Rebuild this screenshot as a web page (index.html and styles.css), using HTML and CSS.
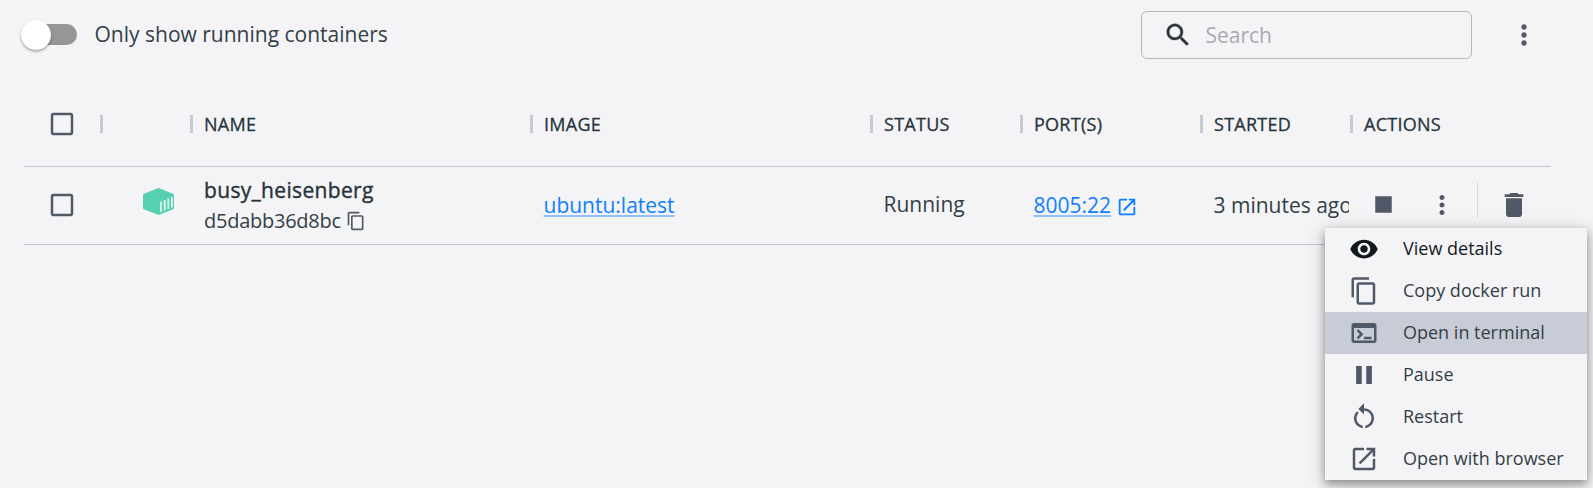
FILE: index.html
```html
<!DOCTYPE html>
<html lang="en">
<head>
<meta charset="utf-8">
<title>Containers</title>
<link rel="stylesheet" href="styles.css">
</head>
<body>
<svg class="defs" aria-hidden="true">
  <symbol id="dots" viewBox="0 0 24 24"><path d="M12 8c1.1 0 2-.9 2-2s-.9-2-2-2-2 .9-2 2 .9 2 2 2zm0 2c-1.1 0-2 .9-2 2s.9 2 2 2 2-.9 2-2-.9-2-2-2zm0 6c-1.1 0-2 .9-2 2s.9 2 2 2 2-.9 2-2-.9-2-2-2z"/></symbol>
  <symbol id="box" viewBox="0 0 24 24"><path d="M19 5v14H5V5h14m0-2H5c-1.100 0-2 .9-2 2v14c0 1.100.9 2 2 2h14c1.100 0 2-.9 2-2V5c0-1.100-.9-2-2-2z"/></symbol>
  <symbol id="copy" viewBox="0 0 24 24"><path d="M16 1H4c-1.100 0-2 .9-2 2v14h2V3h12V1zm3 4H8c-1.100 0-2 .9-2 2v14c0 1.100.9 2 2 2h11c1.100 0 2-.9 2-2V7c0-1.100-.9-2-2-2zm0 16H8V7h11v14z"/></symbol>
  <symbol id="open" viewBox="0 0 24 24"><path d="M19 19H5V5h7V3H5c-1.110 0-2 .9-2 2v14c0 1.100.89 2 2 2h14c1.100 0 2-.9 2-2v-7h-2v7zM14 3v2h3.590l-9.830 9.830 1.410 1.410L19 6.410V10h2V3h-7z"/></symbol>
</svg>
<header class="toolbar">
  <label class="toggle"><span class="track"><span class="thumb"></span></span><span class="toggle-text">Only show running containers</span></label>
  <div class="search">
    <svg class="icon search-icon" viewBox="0 0 24 24"><path d="M15.500 14h-.790l-.280-.270C15.410 12.590 16 11.110 16 9.500 16 5.910 13.090 3 9.500 3S3 5.910 3 9.500 5.910 16 9.500 16c1.610 0 3.090-.590 4.230-1.570l.270.280v.790l5 4.990L20.490 19l-4.990-5zm-6 0C7.010 14 5 11.990 5 9.500S7.010 5 9.500 5 14 7.010 14 9.500 11.990 14 9.500 14z"/></svg>
    <span class="placeholder">Search</span>
  </div>
  <svg class="icon more"><use href="#dots"/></svg>
</header>
<main class="table">
  <div class="row head">
    <div class="check"><svg class="icon"><use href="#box"/></svg></div>
    <div class="cell"></div>
    <div class="cell"><span class="label">NAME</span></div>
    <div class="cell"><span class="label">IMAGE</span></div>
    <div class="cell"><span class="label">STATUS</span></div>
    <div class="cell"><span class="label">PORT(S)</span></div>
    <div class="cell"><span class="label">STARTED</span></div>
    <div class="cell"><span class="label">ACTIONS</span></div>
  </div>
  <div class="row body">
    <div class="check"><svg class="icon"><use href="#box"/></svg></div>
    <div class="type"><svg class="container-icon" viewBox="0 0 31 27"><path class="hull" d="M15.500 0 30 5.700Q31 6.200 31 7V20Q31 20.800 30 21.200L15.500 27 1 21.200Q0 20.800 0 20V7Q0 6.200 1 5.700z"/><path class="slats" d="M18 13.500V24M21.700 12V22.500M25.300 10.500V21M28.900 9V19.500"/></svg></div>
    <div class="data names"><span class="name">busy_heisenberg</span><span class="id">d5dabb36d8bc<svg class="copy-small"><use href="#copy"/></svg></span></div>
    <div class="data"><a class="link">ubuntu:latest</a></div>
    <div class="data"><span class="text status">Running</span></div>
    <div class="data"><a class="link">8005:22</a><svg class="open-small"><use href="#open"/></svg></div>
    <div class="data started"><span class="text">3 minutes ago</span></div>
    <div class="actions">
      <svg class="icon stop" viewBox="0 0 24 24"><path d="M6 6h12v12H6z"/></svg>
      <svg class="icon dots"><use href="#dots"/></svg>
      <span class="divider"></span>
      <svg class="icon trash" viewBox="0 0 24 24"><path d="M6 19c0 1.100.9 2 2 2h8c1.100 0 2-.9 2-2V7H6v12zM19 4h-3.500l-1-1h-5l-1 1H5v2h14V4z"/></svg>
    </div>
  </div>
</main>
<nav class="menu">
  <div class="item first"><svg class="icon" viewBox="0 0 24 24"><path d="M12 4.500C7 4.500 2.730 7.610 1 12c1.730 4.390 6 7.500 11 7.500s9.270-3.110 11-7.500c-1.730-4.390-6-7.500-11-7.500zM12 17c-2.760 0-5-2.240-5-5s2.240-5 5-5 5 2.240 5 5-2.240 5-5 5zm0-8c-1.660 0-3 1.340-3 3s1.340 3 3 3 3-1.340 3-3-1.340-3-3-3z"/></svg><span>View details</span></div>
  <div class="item"><svg class="icon"><use href="#copy"/></svg><span>Copy docker run</span></div>
  <div class="item selected"><svg class="icon" viewBox="0 0 24 24"><path d="M20 4H4c-1.110 0-2 .9-2 2v12c0 1.100.89 2 2 2h16c1.100 0 2-.9 2-2V6c0-1.100-.89-2-2-2zm0 14H4V8h16v10zm-2-1h-6v-2h6v2zM7.500 17l-1.410-1.410L8.670 13l-2.590-2.590L7.500 9l4 4-4 4z"/></svg><span>Open in terminal</span></div>
  <div class="item"><svg class="icon" viewBox="0 0 24 24"><path d="M5.700 4.800h4.500v14.400H5.700zM13.800 4.800h4.500v14.400h-4.500z"/></svg><span>Pause</span></div>
  <div class="item"><svg class="icon" viewBox="0 0 24 24"><path d="M12 5V1L7.500 5.500 12 10V7c3.310 0 6 2.690 6 6 0 2.970-2.170 5.430-5 5.910v2.020c3.950-.490 7-3.850 7-7.930 0-4.420-3.580-8-8-8zM6 13c0-1.650.67-3.150 1.760-4.240L6.340 7.340C4.900 8.790 4 10.790 4 13c0 4.080 3.050 7.440 7 7.930v-2.020c-2.830-.48-5-2.940-5-5.910z"/></svg><span>Restart</span></div>
  <div class="item"><svg class="icon"><use href="#open"/></svg><span>Open with browser</span></div>
</nav>
</body>
</html>
```
FILE: styles.css
```css
* { box-sizing: border-box; }
body { margin: 0; height: 488px; overflow: hidden; position: relative; background: #f4f4f7; color: #333f46; font-family: "Open Sans", "Noto Sans", sans-serif; font-size: 21px; }
svg { display: block; fill: #505968; flex: none; }
.defs { width: 0; height: 0; position: absolute; }
.icon { width: 30px; height: 30px; }

.toolbar { display: flex; align-items: center; height: 70px; padding: 0 53.500px 0 21px; }
.toggle { display: flex; align-items: center; gap: 17.500px; flex: 1; padding-bottom: 1px; }
.track { display: flex; align-items: center; width: 54px; height: 21px; margin-left: 2px; border-radius: 11px; background: #969697; }
.thumb { width: 30px; height: 30px; margin-left: -2px; border-radius: 50%; background: #fff; box-shadow: 0 2px 3px rgba(0,0,0,.22), 0 1px 2px rgba(0,0,0,.15); }
.toggle-text { font-size: 21px; line-height: 30px; padding-bottom: 1px; }
.search { display: flex; align-items: center; gap: 13px; width: 331px; height: 48px; padding-left: 20.500px; border: 1px solid #b7b8bb; border-radius: 6px; margin-right: 35.500px; }
.search-icon { fill: #27343b; stroke: #27343b; stroke-width: .3; margin-bottom: 1px; }
.placeholder { color: #a7abaf; }
.more { width: 32px; height: 32px; margin-bottom: 1px; }

.table { margin: 12px 42px 0 24px; }
.row { display: grid; grid-template-columns: 76px 90px 340px 340px 150px 180px 150px 1fr; border-bottom: 1px solid #c1c7d1; }
.head { height: 85px; align-items: center; }
.body { height: 78px; align-items: center; padding-bottom: 2px; }
.check { padding-left: 22.500px; }
.cell { display: flex; align-items: center; height: 18px; padding-left: 11px; border-left: 3px solid #c5cad3; }
.label { color: #27343b; font-size: 18px; line-height: 18px; letter-spacing: .27px; -webkit-text-stroke: .3px #27343b; }
.type { padding-left: 43px; }
.container-icon { width: 31px; height: 27px; margin-top: -6px; }
.hull { fill: #55d0b0; stroke: none; }
.slats { stroke: #e8f7f5; stroke-width: 1.700; fill: none; }
.data { display: flex; align-items: center; padding-left: 14px; min-width: 0; }
.names { flex-direction: column; align-items: flex-start; padding-top: 2px; }
.name { color: #27343b; line-height: 30px; letter-spacing: .33px; -webkit-text-stroke: .4px #27343b; }
.id { display: flex; align-items: center; gap: 6px; font-size: 20px; line-height: 31px; letter-spacing: -.25px; }
.copy-small { width: 20px; height: 20px; margin-left: -1px; }
.link { color: #0f7fff; line-height: 30px; margin-left: -.5px; text-decoration: underline 2px #8fc0fb; text-underline-offset: 2px; text-decoration-skip-ink: none; }
.status { padding-bottom: 2px; margin-left: -.5px; }
.open-small { width: 22px; height: 22px; margin: 4px 0 0 5px; fill: #0f7fff; }
.started { overflow: hidden; white-space: nowrap; margin-right: 1px; }
.started .text { margin-left: -.5px; }
.actions { display: flex; align-items: center; padding-left: 17px; }
.stop { width: 33px; height: 33px; }
.dots { margin-left: 26.500px; }
.divider { width: 1px; height: 36px; margin: -9px 0 0 20.500px; background: #d9dbe0; }
.trash { width: 32px; height: 32px; margin-left: 20px; }

.menu { position: absolute; left: 1325px; top: 228px; width: 262px; background: #f4f4f7; box-shadow: 0 4px 8px rgba(0,0,0,.3), 0 4px 18px rgba(0,0,0,.22); }
.item { display: flex; align-items: center; gap: 24px; height: 42px; padding: 0 0 1px 24px; font-size: 18px; white-space: nowrap; }
.item span { padding-bottom: 1px; }
.first { color: #12191e; }
.first svg { fill: #12191e; }
.selected { background: #c8ccd6; }
```
